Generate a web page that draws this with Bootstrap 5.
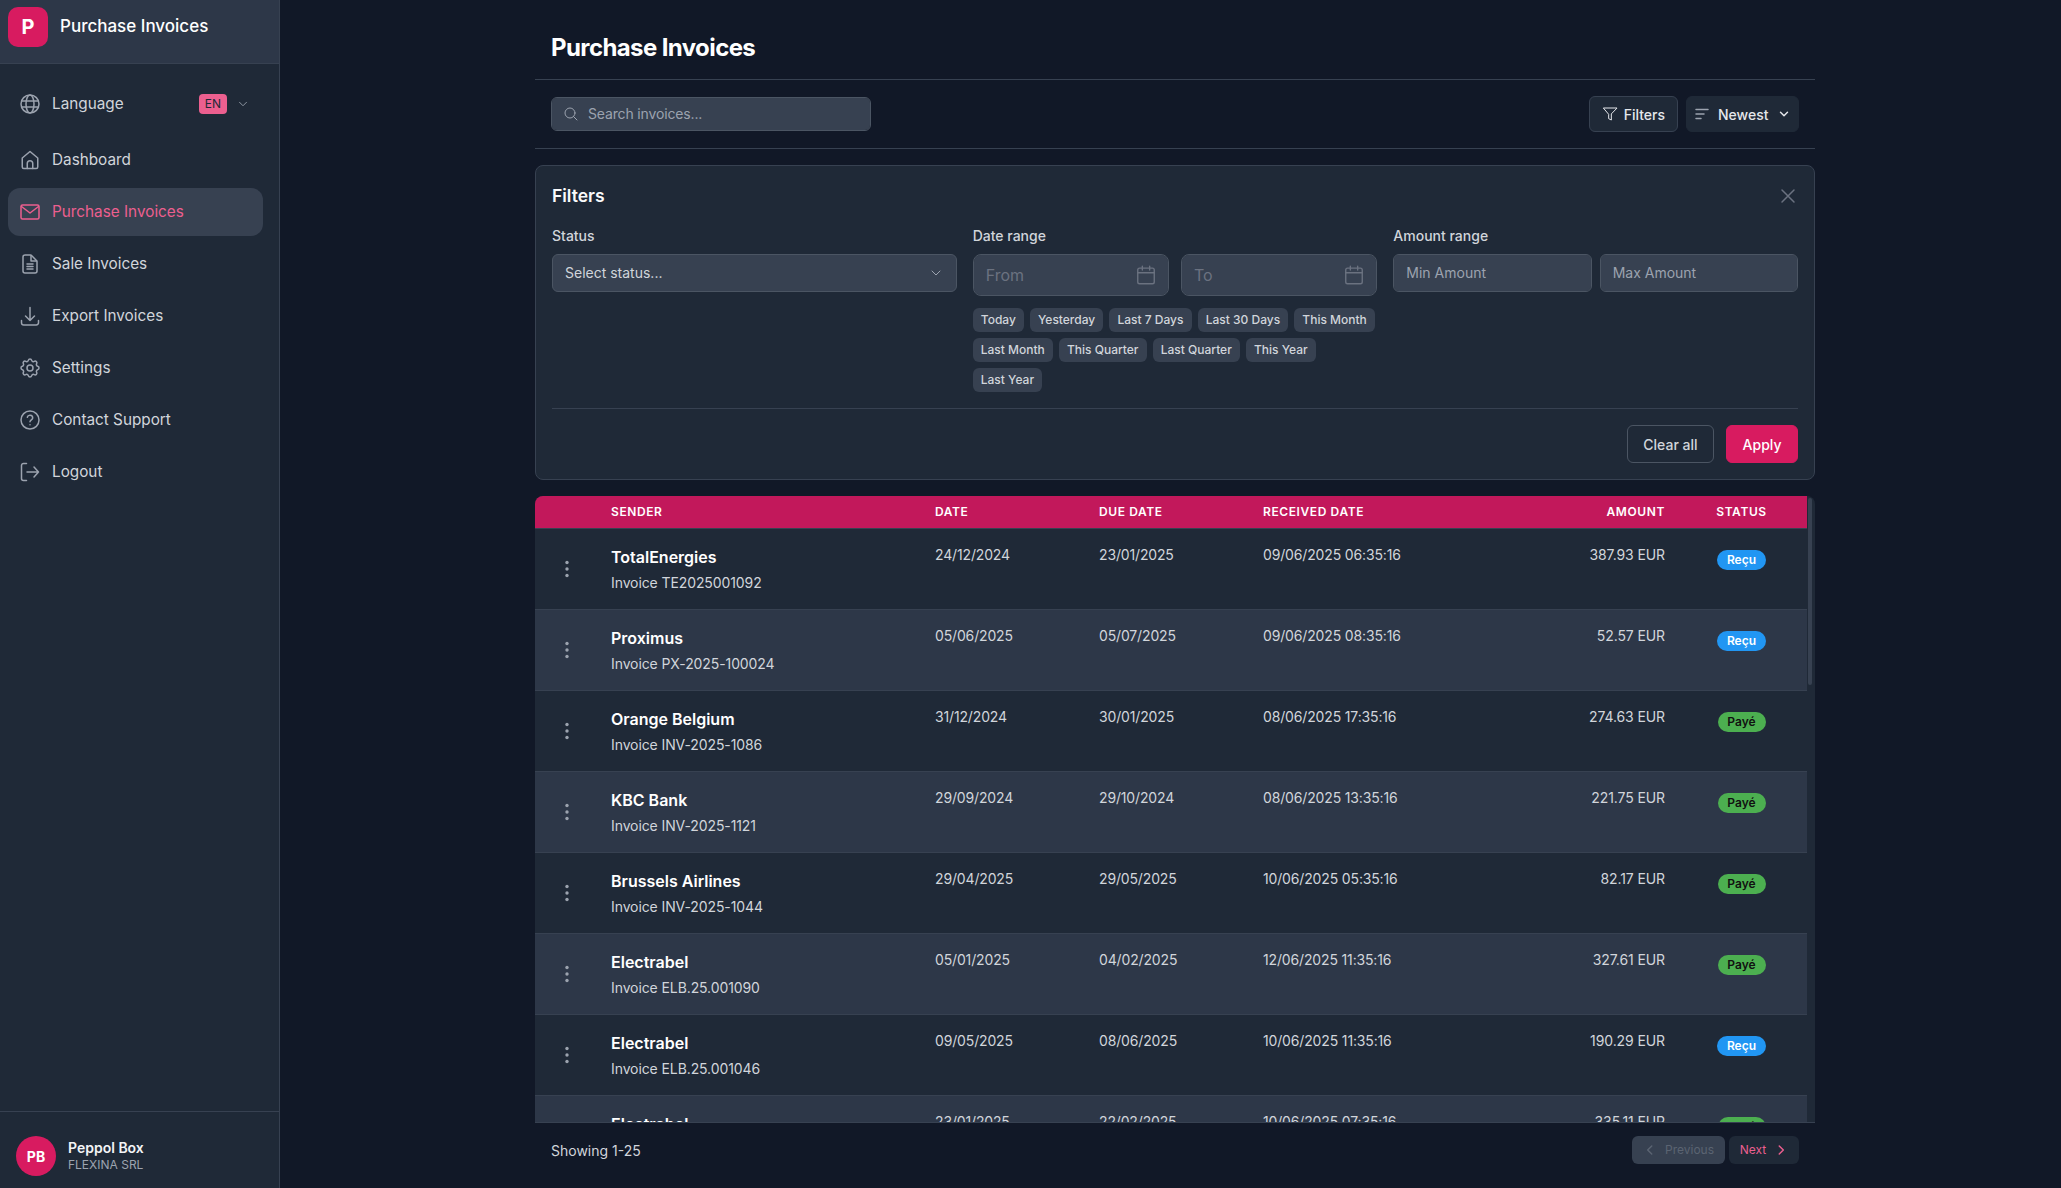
<!DOCTYPE html>
<html lang="en">
<head>
<meta charset="utf-8">
<title>Purchase Invoices</title>
<link href="https://cdn.jsdelivr.net/npm/bootstrap@5.3.0/dist/css/bootstrap.min.css" rel="stylesheet">
<style>
html,body{height:100%;overflow:hidden}
body{background:#111827;color:#d1d5db;font-family:Inter,"Liberation Sans",sans-serif;font-size:14px}
svg.ico{fill:none;stroke:currentColor;stroke-width:1.5;stroke-linecap:round;stroke-linejoin:round;flex:none}
svg.ico.heavy{stroke-width:2.5}
.side{width:280px;flex:none;background:#1f2937;border-right:1px solid #374151;height:100vh}
.side-head{height:64px;background:#2d3748;border-bottom:1px solid #374151;padding:0 8px 9px;gap:12px}
.logo{width:40px;height:40px;background:#d81b60;border-radius:10px;color:#fff;font-weight:700;font-size:20px}
.side-title{font-size:17px;font-weight:500;color:#fff}
.side-nav{padding:16px 16px 16px 8px;gap:4px}
.side-link{height:48px;padding:0 12px;gap:12px;border-radius:12px;color:#d1d5db;font-size:15.3px;text-decoration:none}
.side-link>svg:first-child{color:#9ca3af;margin:0 -2px}
.side-link>span:first-of-type{padding-top:1px}
.side-link.lang-row{margin-bottom:4px}
.side-link.on{background:#374151;color:#ec5f8f}
.side-link.on>svg:first-child{color:#ec5f8f}
.lang-tag{background:#ec5f8f;color:#1f2937;font-size:12px;border-radius:4px;width:28px;height:20px;margin-left:auto}
.lang-caret{margin:0 1px 0 -3px;color:#9ca3af}
.side-foot{margin-top:auto;border-top:1px solid #374151;height:77px;padding:12px 16px 0;gap:12px}
.avatar{width:40px;height:40px;border-radius:50%;background:#d81b60;color:#fff;font-weight:700;font-size:14px}
.foot-name{font-size:14px;font-weight:600;color:#f3f4f6;line-height:18px}
.foot-org{font-size:12px;color:#9ca3af;line-height:16px}
.page{width:1280px;margin-left:255px;height:100vh;flex:none}
.page-head{padding:30px 16px 13px;border-bottom:1px solid #374151}
.page-head h1{font-size:24px;font-weight:700;letter-spacing:-.025em;color:#fff;margin:0;line-height:36px}
.tools{height:69px;padding:0 16px;border-bottom:1px solid #374151}
.search-wrap{width:320px}
.search-wrap svg{position:absolute;left:12px;top:9px;color:#9ca3af}
.dark-input.form-control,.dark-input.form-select{background-color:#374151;border:1px solid #4b5563;color:#d1d5db;font-size:14px;height:38px;border-radius:6px;padding:0 12px 1px;box-shadow:none}
.dark-input.form-control::placeholder{color:#9ca3af;opacity:1}
.search-wrap .dark-input.form-control{height:34px;padding-left:36px;letter-spacing:-.15px}
.dark-input.form-select{background-image:none}
.sel-wrap svg{position:absolute;right:13px;top:11px;color:#9ca3af}
.date-pair{gap:12px}
.date-wrap{flex:1 1 0}
.date-wrap .dark-input.form-control{height:42px;font-size:16px;border-radius:8px}
.date-wrap .dark-input.form-control::placeholder{color:#6b7280}
.date-wrap svg{position:absolute;right:12px;top:10px;color:#6b7280}
.chip-wrap{gap:6px;margin-top:12px}
.tool-btn{height:36px;background:#1f2937;border:1px solid #374151;color:#e5e7eb;font-size:14px;font-weight:500;border-radius:6px;padding:0 12px;gap:6px}
.tool-btn.plain{border-color:#1f2937;padding:0 8px 0 7px;gap:8px;width:113px;white-space:nowrap}
.tool-btn.plain .sort-ic{color:#9ca3af}
.tool-btn.plain .ico:last-child{margin-left:1px}
.panel{margin-top:16px;margin-bottom:16px;background:#1f2937;border:1px solid #374151;border-radius:8px;padding:16px;height:315px}
.panel-title{font-size:17.5px;font-weight:600;color:#f9fafb;line-height:27px}
.x-btn{color:#6b7280;background:none;border:0;padding:0;margin-right:1px}
.panel-grid{display:grid;grid-template-columns:repeat(3,1fr);gap:16px;margin-top:16px;padding-bottom:16px;border-bottom:1px solid #374151}
.f-label{font-size:14px;font-weight:500;color:#d1d5db;line-height:21px;margin-bottom:8px;display:block}
.chip{background:#374151;color:#d1d5db;border:0;height:24px;font-size:12px;font-weight:500;border-radius:6px;padding:0 8.1px;line-height:24px}
.panel-acts{gap:12px;margin-top:16px}
.act-btn{height:38px;font-size:14px;font-weight:500;border-radius:6px;padding:0 15.500px}
.btn-clear{background:#1f2937;border:1px solid #4b5563;color:#d1d5db}
.btn-apply{background:#d81b60;border:1px solid #d81b60;color:#fff}
.grid-outer{flex:1 1 0;min-height:0}
.grid-box{height:100%;overflow-y:scroll;scrollbar-width:none;background:#1f2937;border-radius:8px 8px 0 0;border-bottom:1px solid #374151}
.grid-box::-webkit-scrollbar{display:none}
.thumb{position:absolute;right:3px;top:2px;width:4px;height:187px;background:#374151;border-radius:2px;z-index:2}
.inv-table{table-layout:fixed;width:1272px;margin:0;--bs-table-bg:transparent;--bs-table-color:#d1d5db;--bs-table-border-color:#374151;color:#d1d5db}
.c1{width:60px}.c2{width:324px}.c3{width:164px}.c4{width:164px}.c5{width:253px}.c6{width:181px}.c7{width:126px}
.inv-table th{position:sticky;top:0;z-index:1;background:#c2185b;color:#fff;font-size:12px;font-weight:600;letter-spacing:.05em;text-transform:uppercase;height:32px;padding:0 16px;border-bottom:1px solid #374151;vertical-align:middle;line-height:18px}
.inv-table td{padding:16px 16px 15px;font-size:14px;line-height:21px;vertical-align:top;background:#1f2937;color:#d1d5db;border-bottom:1px solid #374151;letter-spacing:-.1px}
.inv-table td.num{letter-spacing:-.15px;padding-top:15px;padding-bottom:16px}
.inv-table td.amt{padding-top:15px;padding-bottom:16px}
.inv-table tbody tr:nth-child(even) td{background:#2d3748}
.inv-table td.dots-cell{vertical-align:middle;padding:0 0 0 20px;text-align:left}
.inv-table td.stat-cell,.inv-table th.stat-cell{padding:0 5px 0 0;text-align:center}
.inv-table td.stat-cell{padding-top:21px}
.dots{color:#9ca3af;fill:currentColor;display:block}
.v-name{font-size:16px;font-weight:600;color:#fff;line-height:24px;letter-spacing:0}
.v-sub{margin-top:3px;margin-bottom:1px}
.pill{display:block;margin:0 auto;width:49px;height:20px;line-height:20px;border-radius:10px;font-size:12px;font-weight:600;letter-spacing:0}
.pill-blue{background:#2196f3;color:#fff}
.pill-green{background:#4caf50;color:#111;width:48px}
.pager{height:65px;padding:0 16px 11px}
.pg-btn{height:28px;border:0;border-radius:6px;font-size:12px;font-weight:400;gap:8px;padding:0}
.pg-btn.pg-prev:disabled{background:#374151;color:#5b6472;width:93px;opacity:1}
.pg-next{background:#1f2937;color:#ec5f8f;width:70px}
</style>
</head>
<body>
<div class="d-flex">
  <aside class="side d-flex flex-column">
    <div class="side-head d-flex align-items-center">
      <div class="logo d-flex align-items-center justify-content-center">P</div>
      <div class="side-title">Purchase Invoices</div>
    </div>
    <nav class="side-nav d-flex flex-column">
      <a class="side-link lang-row d-flex align-items-center" href="#">
        <svg class="ico" width="24" height="24" viewBox="0 0 24 24"><circle cx="12" cy="12" r="9"/><ellipse cx="12" cy="12" rx="4" ry="9"/><path d="M3.600 9h16.800M3.600 15h16.800"/></svg>
        <span>Language</span>
        <span class="lang-tag d-flex align-items-center justify-content-center">EN</span>
        <svg class="ico lang-caret" width="14" height="14" viewBox="0 0 24 24"><path d="m6 9 6 6 6-6"/></svg>
      </a>
      <a class="side-link d-flex align-items-center" href="#">
        <svg class="ico" width="24" height="24" viewBox="0 0 24 24"><path d="M4.250 10 12 3.500l7.750 6.500v9a1.500 1.500 0 0 1-1.500 1.500H5.750a1.500 1.500 0 0 1-1.500-1.500z"/><path d="M9.250 20.500V15.500a2.750 2.750 0 0 1 5.500 0v5"/></svg>
        <span>Dashboard</span>
      </a>
      <a class="side-link on d-flex align-items-center" href="#">
        <svg class="ico" width="24" height="24" viewBox="0 0 24 24"><rect x="3" y="5" width="18" height="14" rx="1.500"/><path d="m3.500 6.500 8.500 6.500 8.500-6.500"/></svg>
        <span>Purchase Invoices</span>
      </a>
      <a class="side-link d-flex align-items-center" href="#">
        <svg class="ico" width="24" height="24" viewBox="0 0 24 24"><path d="M9 12h6m-6 2.500h6m-6 2.500h6m2 4H7a2 2 0 0 1-2-2V5a2 2 0 0 1 2-2h5.586a1 1 0 0 1 .707.293l5.414 5.414a1 1 0 0 1 .293.707V19a2 2 0 0 1-2 2z"/><path d="M13 3.500V9h5.500"/></svg>
        <span>Sale Invoices</span>
      </a>
      <a class="side-link d-flex align-items-center" href="#">
        <svg class="ico" width="24" height="24" viewBox="0 0 24 24"><path d="M3.500 16.500v2.250a2.250 2.250 0 0 0 2.250 2.250h12.500a2.250 2.250 0 0 0 2.250-2.250V16.500M16.500 12 12 16.500m0 0L7.500 12m4.500 4.500V3.500"/></svg>
        <span>Export Invoices</span>
      </a>
      <a class="side-link d-flex align-items-center" href="#">
        <svg class="ico" width="24" height="24" viewBox="0 0 24 24"><path d="M10.325 4.317c.426-1.756 2.924-1.756 3.350 0a1.724 1.724 0 0 0 2.573 1.066c1.543-.94 3.310.826 2.370 2.370a1.724 1.724 0 0 0 1.065 2.572c1.756.426 1.756 2.924 0 3.350a1.724 1.724 0 0 0-1.066 2.573c.94 1.543-.826 3.310-2.370 2.370a1.724 1.724 0 0 0-2.572 1.065c-.426 1.756-2.924 1.756-3.350 0a1.724 1.724 0 0 0-2.573-1.066c-1.543.94-3.310-.826-2.370-2.370a1.724 1.724 0 0 0-1.065-2.572c-1.756-.426-1.756-2.924 0-3.350a1.724 1.724 0 0 0 1.066-2.573c-.94-1.543.826-3.310 2.370-2.370.996.608 2.296.07 2.572-1.065z"/><circle cx="12" cy="12" r="3"/></svg>
        <span>Settings</span>
      </a>
      <a class="side-link d-flex align-items-center" href="#">
        <svg class="ico" width="24" height="24" viewBox="0 0 24 24"><circle cx="12" cy="12" r="9"/><path d="M9.300 9.300a2.750 2.750 0 0 1 5.400.7c0 1.800-2.700 2-2.700 3.800"/><path d="M12 16.800h.01"/></svg>
        <span>Contact Support</span>
      </a>
      <a class="side-link d-flex align-items-center" href="#">
        <svg class="ico" width="24" height="24" viewBox="0 0 24 24"><path d="M8.500 20.500h-3a2 2 0 0 1-2-2v-13a2 2 0 0 1 2-2h3M16 17l4.500-5L16 7M20.500 12H9"/></svg>
        <span>Logout</span>
      </a>
    </nav>
    <div class="side-foot d-flex align-items-center">
      <div class="avatar d-flex align-items-center justify-content-center">PB</div>
      <div>
        <div class="foot-name">Peppol Box</div>
        <div class="foot-org">FLEXINA SRL</div>
      </div>
    </div>
  </aside>

  <main class="page d-flex flex-column">
    <header class="page-head"><h1>Purchase Invoices</h1></header>
    <div class="tools d-flex align-items-center justify-content-between">
      <div class="search-wrap position-relative">
        <svg class="ico" width="16" height="16" viewBox="0 0 24 24"><circle cx="10.500" cy="10.500" r="7.500"/><path d="m21 21-5.200-5.200"/></svg>
        <input class="form-control dark-input" type="text" placeholder="Search invoices...">
      </div>
      <div class="d-flex gap-2">
        <button class="btn tool-btn d-flex align-items-center" type="button">
          <svg class="ico" width="16" height="16" viewBox="0 0 24 24"><path d="M22 3H2l8 9.460V19l4 2v-8.540z"/></svg>Filters
        </button>
        <button class="btn tool-btn plain d-flex align-items-center" type="button">
          <svg class="ico sort-ic" width="16" height="16" viewBox="0 0 16 16"><path d="M2 3.500h12M2 8h8M2 12.500h5"/></svg>
          <span>Newest</span>
          <svg class="ico heavy" width="14" height="14" viewBox="0 0 24 24"><path d="m6 9 6 6 6-6"/></svg>
        </button>
      </div>
    </div>

    <section class="panel">
      <div class="d-flex align-items-center justify-content-between">
        <div class="panel-title">Filters</div>
        <button class="x-btn d-flex" type="button" aria-label="Close"><svg class="ico" width="18" height="18" viewBox="0 0 18 18"><path d="m3 3 12 12M15 3 3 15"/></svg></button>
      </div>
      <div class="panel-grid">
        <div>
          <label class="f-label">Status</label>
          <div class="sel-wrap position-relative">
            <select class="form-select dark-input"><option>Select status...</option></select>
            <svg class="ico" width="16" height="16" viewBox="0 0 24 24"><path d="m6 9 6 6 6-6"/></svg>
          </div>
        </div>
        <div>
          <label class="f-label">Date range</label>
          <div class="d-flex date-pair">
            <div class="date-wrap position-relative">
              <input class="form-control dark-input" type="text" placeholder="From">
              <svg class="ico" width="22" height="22" viewBox="0 0 24 24"><rect x="3" y="4.500" width="18" height="17" rx="2"/><path d="M3 9.500h18M8 2.500v4M16 2.500v4"/></svg>
            </div>
            <div class="date-wrap position-relative">
              <input class="form-control dark-input" type="text" placeholder="To">
              <svg class="ico" width="22" height="22" viewBox="0 0 24 24"><rect x="3" y="4.500" width="18" height="17" rx="2"/><path d="M3 9.500h18M8 2.500v4M16 2.500v4"/></svg>
            </div>
          </div>
          <div class="d-flex flex-wrap chip-wrap">
            <button class="btn chip" type="button">Today</button>
            <button class="btn chip" type="button">Yesterday</button>
            <button class="btn chip" type="button">Last 7 Days</button>
            <button class="btn chip" type="button">Last 30 Days</button>
            <button class="btn chip" type="button">This Month</button>
            <button class="btn chip" type="button">Last Month</button>
            <button class="btn chip" type="button">This Quarter</button>
            <button class="btn chip" type="button">Last Quarter</button>
            <button class="btn chip" type="button">This Year</button>
            <button class="btn chip" type="button">Last Year</button>
          </div>
        </div>
        <div>
          <label class="f-label">Amount range</label>
          <div class="d-flex gap-2">
            <input class="form-control dark-input" type="text" placeholder="Min Amount">
            <input class="form-control dark-input" type="text" placeholder="Max Amount">
          </div>
        </div>
      </div>
      <div class="d-flex justify-content-end panel-acts">
        <button class="btn act-btn btn-clear" type="button">Clear all</button>
        <button class="btn act-btn btn-apply" type="button">Apply</button>
      </div>
    </section>

    <div class="grid-outer position-relative">
      <div class="grid-box">
        <table class="table inv-table">
          <colgroup><col class="c1"><col class="c2"><col class="c3"><col class="c4"><col class="c5"><col class="c6"><col class="c7"></colgroup>
          <thead><tr><th></th><th>Sender</th><th>Date</th><th>Due Date</th><th>Received Date</th><th class="text-end">Amount</th><th class="stat-cell">Status</th></tr></thead>
          <tbody id="rows"></tbody>
        </table>
      </div>
      <div class="thumb"></div>
    </div>

    <footer class="pager d-flex align-items-center justify-content-between">
      <span>Showing 1-25</span>
      <div class="d-flex gap-1">
        <button class="btn pg-btn pg-prev d-flex align-items-center justify-content-center" type="button" disabled>
          <svg class="ico heavy" width="14" height="14" viewBox="0 0 24 24"><path d="m15 5-7 7 7 7"/></svg>Previous
        </button>
        <button class="btn pg-btn pg-next d-flex align-items-center justify-content-center" type="button">Next
          <svg class="ico heavy" width="14" height="14" viewBox="0 0 24 24"><path d="m9 5 7 7-7 7"/></svg>
        </button>
      </div>
    </footer>
  </main>
</div>
<script src="https://cdn.jsdelivr.net/npm/bootstrap@5.3.0/dist/js/bootstrap.bundle.min.js"></script>
<script>
var data=[
["TotalEnergies","TE2025001092","24/12/2024","23/01/2025","09/06/2025 06:35:16","387.93",0],
["Proximus","PX-2025-100024","05/06/2025","05/07/2025","09/06/2025 08:35:16","52.57",0],
["Orange Belgium","INV-2025-1086","31/12/2024","30/01/2025","08/06/2025 17:35:16","274.63",1],
["KBC Bank","INV-2025-1121","29/09/2024","29/10/2024","08/06/2025 13:35:16","221.75",1],
["Brussels Airlines","INV-2025-1044","29/04/2025","29/05/2025","10/06/2025 05:35:16","82.17",1],
["Electrabel","ELB.25.001090","05/01/2025","04/02/2025","12/06/2025 11:35:16","327.61",1],
["Electrabel","ELB.25.001046","09/05/2025","08/06/2025","10/06/2025 11:35:16","190.29",0],
["Electrabel","ELB.25.001012","23/01/2025","22/02/2025","10/06/2025 07:35:16","335.11",1]];
document.getElementById('rows').innerHTML=data.map(function(r){
return '<tr><td class="dots-cell"><svg class="dots" width="24" height="24" viewBox="0 0 24 24"><circle cx="12" cy="5.5" r="1.7"/><circle cx="12" cy="12" r="1.7"/><circle cx="12" cy="18.500" r="1.7"/></svg></td>'+
'<td><div class="v-name">'+r[0]+'</div><div class="v-sub">Invoice '+r[1]+'</div></td><td class="num">'+r[2]+'</td><td class="num">'+r[3]+'</td><td class="num">'+r[4]+'</td><td class="amt text-end">'+r[5]+' EUR</td>'+
'<td class="stat-cell"><span class="pill '+(r[6]?'pill-green">Payé':'pill-blue">Reçu')+'</span></td></tr>';
}).join('');
</script>
</body>
</html>
